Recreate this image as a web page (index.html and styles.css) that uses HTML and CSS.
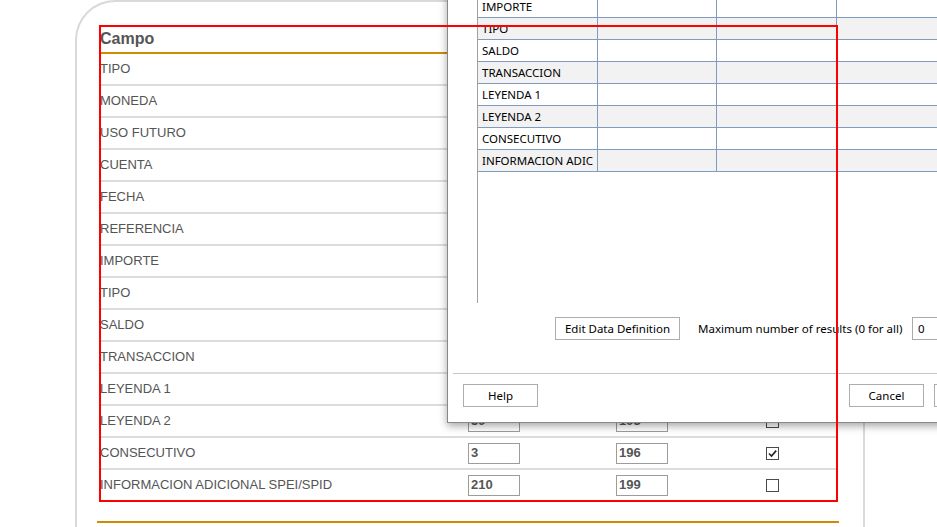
FILE: index.html
```html
<!DOCTYPE html>
<html lang="es">
<head>
<meta charset="utf-8">
<title>Campos</title>
<link rel="stylesheet" href="styles.css">
</head>
<body>
<div class="card">
  <div class="table">
    <div class="thead">Campo</div>
    <div class="row"><span class="label">TIPO</span><span class="inp">1</span><span class="inp">1</span><span class="chk"></span></div>
    <div class="row"><span class="label">MONEDA</span><span class="inp">2</span><span class="inp">2</span><span class="chk"></span></div>
    <div class="row"><span class="label">USO FUTURO</span><span class="inp">4</span><span class="inp">16</span><span class="chk"></span></div>
    <div class="row"><span class="label">CUENTA</span><span class="inp">20</span><span class="inp">11</span><span class="chk"></span></div>
    <div class="row"><span class="label">FECHA</span><span class="inp">31</span><span class="inp">6</span><span class="chk"></span></div>
    <div class="row"><span class="label">REFERENCIA</span><span class="inp">37</span><span class="inp">10</span><span class="chk"></span></div>
    <div class="row"><span class="label">IMPORTE</span><span class="inp">47</span><span class="inp">14</span><span class="chk"></span></div>
    <div class="row"><span class="label">TIPO</span><span class="inp">61</span><span class="inp">1</span><span class="chk"></span></div>
    <div class="row"><span class="label">SALDO</span><span class="inp">62</span><span class="inp">14</span><span class="chk"></span></div>
    <div class="row"><span class="label">TRANSACCION</span><span class="inp">76</span><span class="inp">3</span><span class="chk"></span></div>
    <div class="row"><span class="label">LEYENDA 1</span><span class="inp">79</span><span class="inp">50</span><span class="chk"></span></div>
    <div class="row"><span class="label">LEYENDA 2</span><span class="inp">59</span><span class="inp">193</span><span class="chk"></span></div>
    <div class="row"><span class="label">CONSECUTIVO</span><span class="inp">3</span><span class="inp">196</span><span class="chk"><svg width="11" height="11" viewBox="0 0 11 11"><path d="M2 5.5 L4.5 8 L9.2 2.6" fill="none" stroke="#222" stroke-width="1.6"/></svg></span></div>
    <div class="row"><span class="label">INFORMACION ADICIONAL SPEI/SPID</span><span class="inp">210</span><span class="inp">199</span><span class="chk"></span></div>
  </div>
  <div class="footer-line"></div>
</div>

<div class="dialog">
  <div class="grid">
    <div class="grow alt"><span class="gc">REFERENCIA</span><span class="gc"></span><span class="gc"></span><span class="gc"></span></div>
    <div class="grow"><span class="gc">IMPORTE</span><span class="gc"></span><span class="gc"></span><span class="gc"></span></div>
    <div class="grow alt"><span class="gc">TIPO</span><span class="gc"></span><span class="gc"></span><span class="gc"></span></div>
    <div class="grow"><span class="gc">SALDO</span><span class="gc"></span><span class="gc"></span><span class="gc"></span></div>
    <div class="grow alt"><span class="gc">TRANSACCION</span><span class="gc"></span><span class="gc"></span><span class="gc"></span></div>
    <div class="grow"><span class="gc">LEYENDA 1</span><span class="gc"></span><span class="gc"></span><span class="gc"></span></div>
    <div class="grow alt"><span class="gc">LEYENDA 2</span><span class="gc"></span><span class="gc"></span><span class="gc"></span></div>
    <div class="grow"><span class="gc">CONSECUTIVO</span><span class="gc"></span><span class="gc"></span><span class="gc"></span></div>
    <div class="grow alt"><span class="gc">INFORMACION ADIC</span><span class="gc"></span><span class="gc"></span><span class="gc"></span></div>
  </div>
  <div class="actions">
    <span class="btn btn-edit">Edit Data Definition</span>
    <span class="maxlabel">Maximum number of results (0 for all)</span>
    <span class="maxinput">0</span>
  </div>
  <div class="sep"></div>
  <div class="footer">
    <span class="btn btn-small">Help</span>
    <span class="btn btn-small cancel">Cancel</span>
    <span class="btn btn-small ok">OK</span>
  </div>
</div>

<div class="annot"></div>
</body>
</html>
```

FILE: styles.css
```css
html, body {
  margin: 0;
  height: 100%;
  overflow: hidden;
  background: #fff;
}

body {
  position: relative;
  font-family: "Liberation Sans", Arial, sans-serif;
}

.card {
  margin-left: 75px;
  width: 790px;
  height: 600px;
  box-sizing: border-box;
  border: 2px solid #d9d9d9;
  border-bottom: 0;
  border-radius: 40px 40px 0 0;
  padding: 23px 26px 0 23px;
}

.thead {
  height: 27px;
  line-height: 27px;
  font-size: 16px;
  font-weight: bold;
  color: #555;
  border-bottom: 2px solid #d18b00;
}

.row {
  display: grid;
  grid-template-columns: 368px 148px 150px 1fr;
  align-items: center;
  height: 30px;
  border-bottom: 2px solid #dcdcdc;
  font-size: 13px;
  color: #555;
}

.label {
  white-space: nowrap;
  margin-bottom: 2px;
}

.inp {
  width: 52px;
  height: 21px;
  box-sizing: border-box;
  border: 1px solid #9c9c9c;
  padding-left: 2px;
  line-height: 18px;
  font-weight: bold;
  color: #555;
}

.chk {
  width: 13px;
  height: 13px;
  box-sizing: border-box;
  border: 1px solid #4a4a4a;
  background: #fff;
  display: flex;
  align-items: center;
  justify-content: center;
}

.footer-line {
  margin: 19px 0 0 -3px;
  width: 742px;
  height: 2px;
  background: #d18b00;
}

/* dialog window */
.dialog {
  position: absolute;
  left: 447px;
  top: -27px;
  width: 578px;
  box-sizing: border-box;
  display: flex;
  flex-direction: column;
  border: 1px solid #888;
  background: #fff;
  box-shadow: 0 3px 8px rgba(0, 0, 0, 0.35);
  padding-bottom: 15px;
  font-family: "Noto Sans", "Open Sans", sans-serif;
  font-size: 11.5px;
  color: #000;
}

.grid {
  margin-left: 29px;
  height: 329px;
  border-left: 1px solid #a0a0a0;
}

.grow {
  display: grid;
  grid-template-columns: 120px 119px 120px 1fr;
  height: 22px;
  box-sizing: border-box;
  border-bottom: 1px solid #7f9cc0;
  background: #fff;
}

.grow.alt {
  background: #f2f2f2;
}

.gc {
  border-right: 1px solid #7f9cc0;
  padding-left: 4px;
  line-height: 21px;
  white-space: nowrap;
  overflow: hidden;
}

.actions {
  display: flex;
  align-items: center;
  margin-top: 14px;
  height: 23px;
}

.btn {
  height: 23px;
  box-sizing: border-box;
  border: 1px solid #adadad;
  background: #fff;
  display: flex;
  align-items: center;
  justify-content: center;
}

.btn-edit {
  margin-left: 107px;
  width: 125px;
}

.maxlabel {
  margin-left: 18px;
  width: 214px;
  white-space: nowrap;
}

.maxinput {
  width: 80px;
  height: 23px;
  box-sizing: border-box;
  border: 1px solid #aaa;
  padding-left: 5px;
  line-height: 21px;
}

.sep {
  margin: 33px 0 0 5px;
  height: 1px;
  background: #c6c6c6;
}

.footer {
  display: flex;
  margin-top: 10px;
  padding: 0 15px;
}

.btn-small {
  width: 75px;
}

.cancel {
  margin-left: auto;
}

.ok {
  margin-left: 10px;
}

/* annotation frame */
.annot {
  position: absolute;
  left: 99px;
  top: 25px;
  width: 739px;
  height: 477px;
  box-sizing: border-box;
  border: 2px solid #f00;
  pointer-events: none;
}
```
